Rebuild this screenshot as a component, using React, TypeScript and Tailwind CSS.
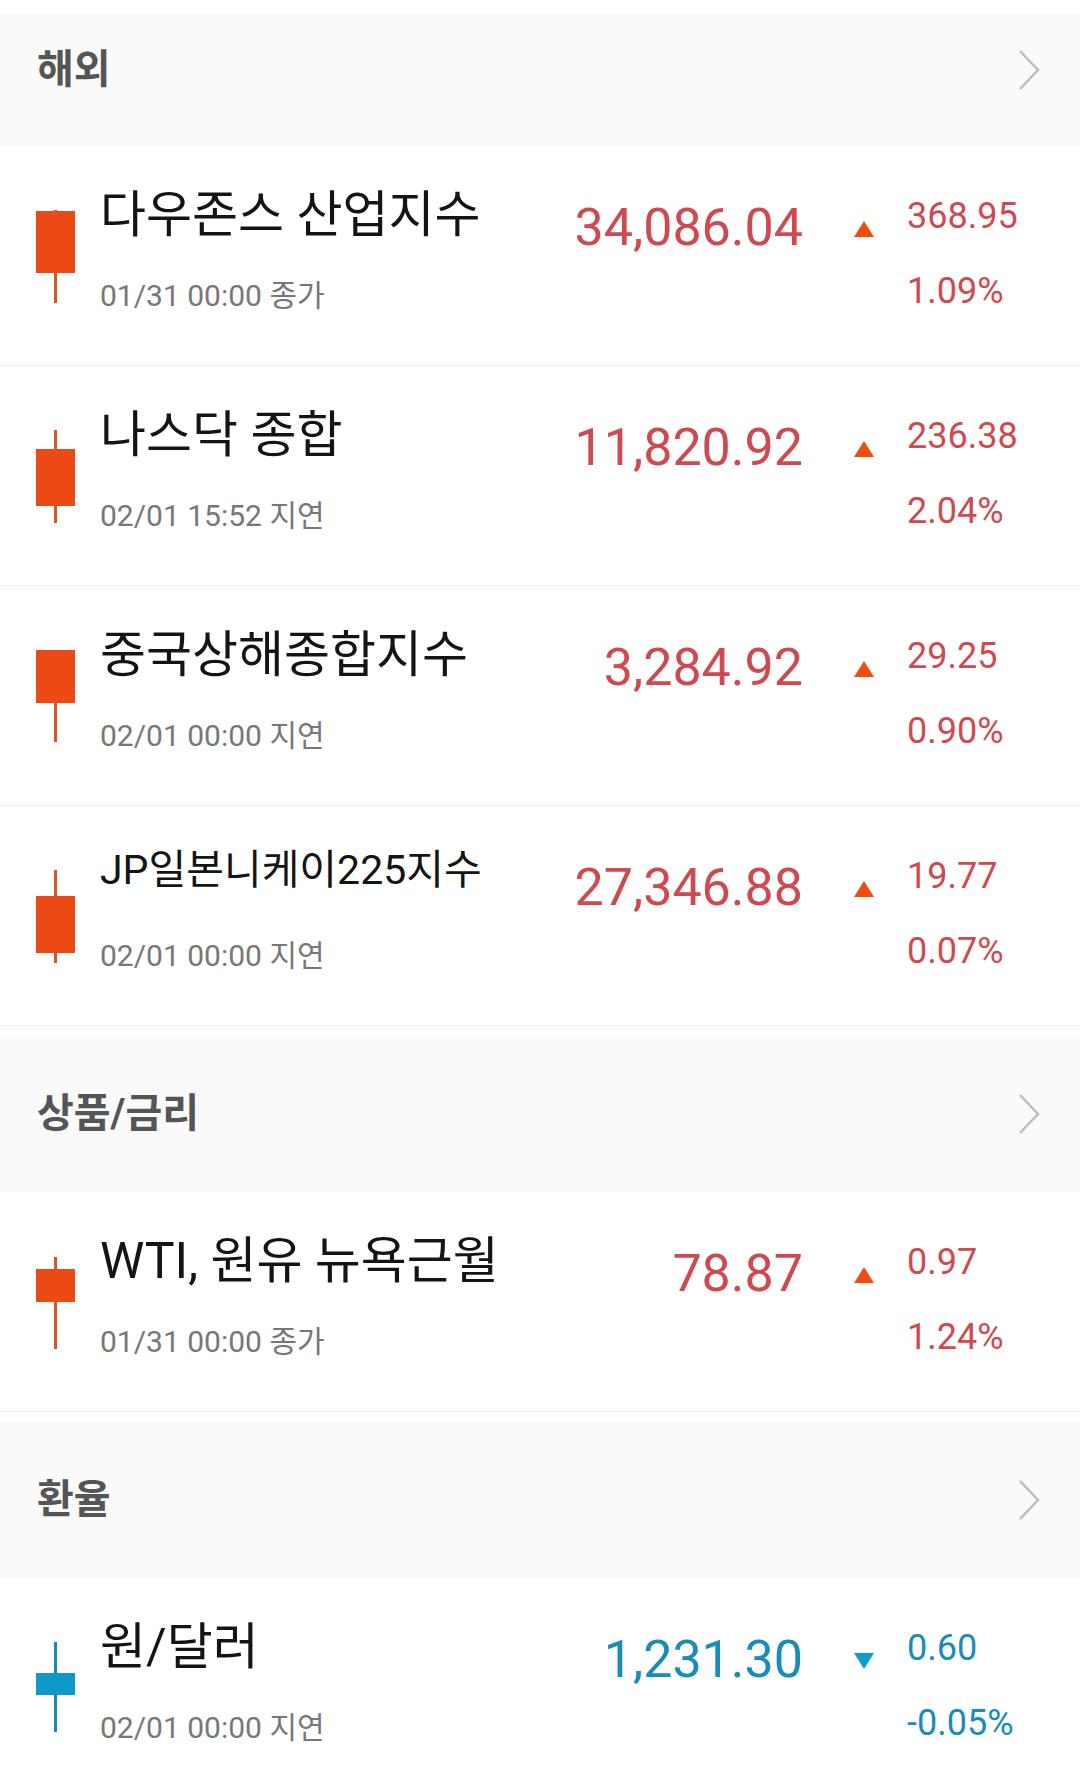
type Candle = { wickTop: number; wickBottom: number; bodyTop: number; bodyBottom: number }

type Quote = {
  name: string
  small?: boolean
  time: string
  price: string
  up: boolean
  change: string
  rate: string
  candle: Candle
}

const sections: { title: string; first?: boolean; items: Quote[] }[] = [
  {
    title: "해외",
    first: true,
    items: [
      { name: "다우존스 산업지수", time: "01/31 00:00 종가", price: "34,086.04", up: true, change: "368.95", rate: "1.09%", candle: { wickTop: 0, wickBottom: 93, bodyTop: 1, bodyBottom: 63 } },
      { name: "나스닥 종합", time: "02/01 15:52 지연", price: "11,820.92", up: true, change: "236.38", rate: "2.04%", candle: { wickTop: 0, wickBottom: 93, bodyTop: 19, bodyBottom: 76 } },
      { name: "중국상해종합지수", time: "02/01 00:00 지연", price: "3,284.92", up: true, change: "29.25", rate: "0.90%", candle: { wickTop: 0, wickBottom: 92, bodyTop: 0, bodyBottom: 53 } },
      { name: "JP일본니케이225지수", small: true, time: "02/01 00:00 지연", price: "27,346.88", up: true, change: "19.77", rate: "0.07%", candle: { wickTop: 0, wickBottom: 93, bodyTop: 26, bodyBottom: 83 } },
    ],
  },
  {
    title: "상품/금리",
    items: [
      { name: "WTI, 원유 뉴욕근월", time: "01/31 00:00 종가", price: "78.87", up: true, change: "0.97", rate: "1.24%", candle: { wickTop: 1, wickBottom: 93, bodyTop: 13, bodyBottom: 46 } },
    ],
  },
  {
    title: "환율",
    items: [
      { name: "원/달러", time: "02/01 00:00 지연", price: "1,231.30", up: false, change: "0.60", rate: "-0.05%", candle: { wickTop: 0, wickBottom: 90, bodyTop: 31, bodyBottom: 53 } },
    ],
  },
]

function CandleStick({ candle, up }: { candle: Candle; up: boolean }) {
  const body = up ? "#eb4a15" : "#0f99c9"
  const wick = up ? "#d2582a" : "#1889b5"
  return (
    <svg width="39" height="93" viewBox="0 0 39 93">
      <rect x="18" y={candle.wickTop} width="3" height={candle.wickBottom - candle.wickTop} fill={wick} />
      <rect x="0" y={candle.bodyTop} width="39" height={candle.bodyBottom - candle.bodyTop} fill={body} />
    </svg>
  )
}

function Chevron() {
  return (
    <svg width="22" height="42" viewBox="0 0 22 42" fill="none">
      <polyline points="2,2 20,21 2,40" stroke="#bdbdbd" strokeWidth="2.5" />
    </svg>
  )
}

function SectionHeader({ title, first }: { title: string; first?: boolean }) {
  return (
    <div
      className={
        first
          ? "flex h-[132px] items-center justify-between bg-[#fafafa] pb-[20px] pl-[37px] pr-[40px]"
          : "mt-[10px] flex h-[156px] items-center justify-between bg-[#fafafa] pl-[37px] pr-[40px]"
      }
    >
      <span className="text-[40px] font-bold text-[#555555]">{title}</span>
      <Chevron />
    </div>
  )
}

function QuoteRow({ q }: { q: Quote }) {
  const color = q.up ? "text-[#cf4a50]" : "text-[#1a8cb8]"
  return (
    <div className="flex h-[220px] border-b border-[#f1f1f1] bg-white">
      <div className="ml-[36px] mt-[64px] w-[39px] shrink-0">
        <CandleStick candle={q.candle} up={q.up} />
      </div>
      <div className="ml-[25px] flex-1 pt-[44px]">
        <div
          className={
            q.small
              ? "h-[50px] text-[41px] leading-[41px] text-[#141414] whitespace-nowrap"
              : "h-[50px] text-[50px] leading-[50px] text-[#141414] whitespace-nowrap"
          }
        >
          {q.name}
        </div>
        <div className="mt-[41px] text-[30px] leading-none text-[#777777] whitespace-nowrap">{q.time}</div>
      </div>
      <div className={`shrink-0 pt-[56px] text-right text-[52px] leading-none ${color}`}>{q.price}</div>
      <div className="ml-[51px] w-[20px] shrink-0 pt-[75px]">
        <svg width="20" height="16" viewBox="0 0 20 16">
          {q.up ? (
            <polygon points="10,0 20,16 0,16" fill="#ee4d0e" />
          ) : (
            <polygon points="0,0 20,0 10,16" fill="#0f9ad0" />
          )}
        </svg>
      </div>
      <div className={`ml-[33px] w-[173px] shrink-0 pt-[52px] text-[36px] leading-none ${color}`}>
        <div>{q.change}</div>
        <div className="mt-[39px]">{q.rate}</div>
      </div>
    </div>
  )
}

export default function App() {
  return (
    <div className="min-h-screen w-[1080px] bg-white pt-[14px] font-[Roboto,'Noto_Sans_CJK_KR',sans-serif]">
      {sections.map((s) => (
        <div key={s.title}>
          <SectionHeader title={s.title} first={s.first} />
          {s.items.map((q) => (
            <QuoteRow key={q.name} q={q} />
          ))}
        </div>
      ))}
    </div>
  )
}
